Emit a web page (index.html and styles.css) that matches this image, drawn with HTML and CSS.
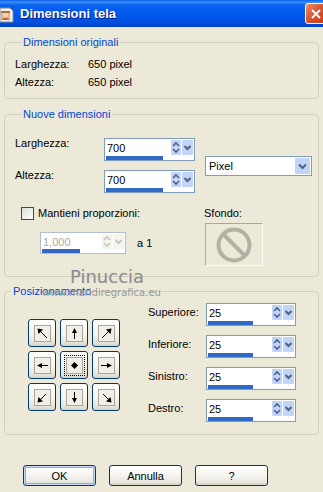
FILE: index.html
```html
<!DOCTYPE html>
<html>

<head>
    <title>Dimensioni tela</title>
    <link rel="stylesheet" href="styles.css">
</head>

<body>
    <div class="window">
        <!-- barra del titolo -->
        <div class="titlebar">
            <svg class="app-icon" width="16" height="16" viewBox="0 0 16 16">
                <path d="M1 1 H11 L14 4 V15 H1 Z" fill="#f4f1ea" stroke="#8a8a8a" />
                <rect x="2" y="4" width="9" height="9" fill="#e9b48c" />
                <circle cx="6.5" cy="7.5" r="2.6" fill="#f7d3b4" />
                <path d="M2 13 Q6.5 8.5 11 13 Z" fill="#c0653d" />
                <rect x="2" y="4" width="9" height="2" fill="#b06b4a" />
            </svg>
            <span class="title">Dimensioni tela</span>
            <div class="close-btn">
                <svg width="12" height="12" viewBox="0 0 12 12">
                    <path d="M2 2 L10 10 M10 2 L2 10" stroke="#fff" stroke-width="2" />
                </svg>
            </div>
        </div>

        <fieldset class="group group-orig">
            <legend>Dimensioni originali</legend>
            <div class="info-row"><span class="info-label">Larghezza:</span><span>650 pixel</span></div>
            <div class="info-row"><span class="info-label">Altezza:</span><span>650 pixel</span></div>
        </fieldset>

        <fieldset class="group group-new">
            <legend>Nuove dimensioni</legend>
            <div class="new-top">
                <div class="new-fields">
                    <div class="field-row">
                        <span class="field-label">Larghezza:</span>
                        <div class="spin">
                            <div class="spin-top">
                                <span class="spin-value">700</span>
                                <span class="spin-btn updown"><svg width="10" height="15" viewBox="0 0 10 15"><path d="M2 6 L5 3 L8 6 M2 9 L5 12 L8 9" fill="none" stroke="#4d6185" stroke-width="1.6" /></svg></span>
                                <span class="spin-btn drop"><svg width="11" height="15" viewBox="0 0 11 15"><path d="M2.5 6 L5.5 9 L8.5 6" fill="none" stroke="#4d6185" stroke-width="2" /></svg></span>
                            </div>
                            <div class="spin-bar" style="width: 57px"></div>
                        </div>
                    </div>
                    <div class="field-row">
                        <span class="field-label">Altezza:</span>
                        <div class="spin">
                            <div class="spin-top">
                                <span class="spin-value">700</span>
                                <span class="spin-btn updown"><svg width="10" height="15" viewBox="0 0 10 15"><path d="M2 6 L5 3 L8 6 M2 9 L5 12 L8 9" fill="none" stroke="#4d6185" stroke-width="1.6" /></svg></span>
                                <span class="spin-btn drop"><svg width="11" height="15" viewBox="0 0 11 15"><path d="M2.5 6 L5.5 9 L8.5 6" fill="none" stroke="#4d6185" stroke-width="2" /></svg></span>
                            </div>
                            <div class="spin-bar" style="width: 57px"></div>
                        </div>
                    </div>
                </div>
                <div class="select">
                    <span class="select-value">Pixel</span>
                    <span class="select-btn"><svg width="15" height="16" viewBox="0 0 15 16"><path d="M4 6.5 L7.5 10 L11 6.5" fill="none" stroke="#4d6185" stroke-width="2" /></svg></span>
                </div>
            </div>
            <div class="new-bottom">
                <div class="ratio-col">
                    <div class="check-row">
                        <span class="checkbox"></span>
                        <span>Mantieni proporzioni:</span>
                    </div>
                    <div class="ratio-row">
                        <div class="spin spin-ratio disabled">
                            <div class="spin-top">
                                <span class="spin-value">1,000</span>
                                <span class="spin-btn updown"><svg width="10" height="15" viewBox="0 0 10 15"><path d="M2 6 L5 3 L8 6 M2 9 L5 12 L8 9" fill="none" stroke="#c9c7ba" stroke-width="1.6" /></svg></span>
                                <span class="spin-btn drop"><svg width="11" height="15" viewBox="0 0 11 15"><path d="M2.5 6 L5.5 9 L8.5 6" fill="none" stroke="#c9c7ba" stroke-width="2" /></svg></span>
                            </div>
                            <div class="spin-bar" style="width: 38px"></div>
                        </div>
                        <span class="ratio-text">a 1</span>
                    </div>
                </div>
                <div class="bg-col">
                    <span>Sfondo:</span>
                    <div class="bg-box">
                        <svg width="40" height="40" viewBox="0 0 40 40">
                            <circle cx="20" cy="20" r="15.5" fill="none" stroke="#b4b1a4" stroke-width="4" />
                            <path d="M9 9 L31 31" stroke="#b4b1a4" stroke-width="4" />
                        </svg>
                    </div>
                </div>
            </div>
        </fieldset>

        <fieldset class="group group-pos">
            <legend>Posizionamento</legend>
            <div class="pos-body">
                <div class="pos-grid">
                    <div class="pos-btn"><span class="pos-icon"><svg width="15" height="15" viewBox="0 0 15 15"><path d="M4 4 L12 12" stroke="#000" /><path d="M2.5 2.5 L8 3.5 L3.5 8 Z" /></svg></span></div>
                    <div class="pos-btn"><span class="pos-icon"><svg width="15" height="15" viewBox="0 0 15 15"><path d="M7.5 5 V13" stroke="#000" /><path d="M7.5 2 L10 7 L5 7 Z" /></svg></span></div>
                    <div class="pos-btn"><span class="pos-icon"><svg width="15" height="15" viewBox="0 0 15 15"><path d="M11 4 L3 12" stroke="#000" /><path d="M12.5 2.5 L11.5 8 L7 3.5 Z" /></svg></span></div>
                    <div class="pos-btn"><span class="pos-icon"><svg width="15" height="15" viewBox="0 0 15 15"><path d="M5 7.5 H13" stroke="#000" /><path d="M2 7.5 L7 5 L7 10 Z" /></svg></span></div>
                    <div class="pos-btn focused"><span class="pos-icon"><svg width="15" height="15" viewBox="0 0 15 15"><path d="M7.5 4 L11 7.5 L7.5 11 L4 7.5 Z" /></svg></span></div>
                    <div class="pos-btn"><span class="pos-icon"><svg width="15" height="15" viewBox="0 0 15 15"><path d="M2 7.5 H10" stroke="#000" /><path d="M13 7.5 L8 5 L8 10 Z" /></svg></span></div>
                    <div class="pos-btn"><span class="pos-icon"><svg width="15" height="15" viewBox="0 0 15 15"><path d="M11 4 L4 11" stroke="#000" /><path d="M2.5 12.5 L3.5 7 L8 11.5 Z" /></svg></span></div>
                    <div class="pos-btn"><span class="pos-icon"><svg width="15" height="15" viewBox="0 0 15 15"><path d="M7.5 2 V10" stroke="#000" /><path d="M7.5 13 L10 8 L5 8 Z" /></svg></span></div>
                    <div class="pos-btn"><span class="pos-icon"><svg width="15" height="15" viewBox="0 0 15 15"><path d="M4 4 L11 11" stroke="#000" /><path d="M12.5 12.5 L7 11.5 L11.5 7 Z" /></svg></span></div>
                </div>
                <div class="margin-fields">
                    <div class="margin-row">
                        <span class="margin-label">Superiore:</span>
                        <div class="spin spin-margin">
                            <div class="spin-top">
                                <span class="spin-value">25</span>
                                <span class="spin-btn updown"><svg width="10" height="15" viewBox="0 0 10 15"><path d="M2 6 L5 3 L8 6 M2 9 L5 12 L8 9" fill="none" stroke="#4d6185" stroke-width="1.6" /></svg></span>
                                <span class="spin-btn drop"><svg width="11" height="15" viewBox="0 0 11 15"><path d="M2.5 6 L5.5 9 L8.5 6" fill="none" stroke="#4d6185" stroke-width="2" /></svg></span>
                            </div>
                            <div class="spin-bar" style="width: 45px"></div>
                        </div>
                    </div>
                    <div class="margin-row">
                        <span class="margin-label">Inferiore:</span>
                        <div class="spin spin-margin">
                            <div class="spin-top">
                                <span class="spin-value">25</span>
                                <span class="spin-btn updown"><svg width="10" height="15" viewBox="0 0 10 15"><path d="M2 6 L5 3 L8 6 M2 9 L5 12 L8 9" fill="none" stroke="#4d6185" stroke-width="1.6" /></svg></span>
                                <span class="spin-btn drop"><svg width="11" height="15" viewBox="0 0 11 15"><path d="M2.5 6 L5.5 9 L8.5 6" fill="none" stroke="#4d6185" stroke-width="2" /></svg></span>
                            </div>
                            <div class="spin-bar" style="width: 45px"></div>
                        </div>
                    </div>
                    <div class="margin-row">
                        <span class="margin-label">Sinistro:</span>
                        <div class="spin spin-margin">
                            <div class="spin-top">
                                <span class="spin-value">25</span>
                                <span class="spin-btn updown"><svg width="10" height="15" viewBox="0 0 10 15"><path d="M2 6 L5 3 L8 6 M2 9 L5 12 L8 9" fill="none" stroke="#4d6185" stroke-width="1.6" /></svg></span>
                                <span class="spin-btn drop"><svg width="11" height="15" viewBox="0 0 11 15"><path d="M2.5 6 L5.5 9 L8.5 6" fill="none" stroke="#4d6185" stroke-width="2" /></svg></span>
                            </div>
                            <div class="spin-bar" style="width: 45px"></div>
                        </div>
                    </div>
                    <div class="margin-row">
                        <span class="margin-label">Destro:</span>
                        <div class="spin spin-margin">
                            <div class="spin-top">
                                <span class="spin-value">25</span>
                                <span class="spin-btn updown"><svg width="10" height="15" viewBox="0 0 10 15"><path d="M2 6 L5 3 L8 6 M2 9 L5 12 L8 9" fill="none" stroke="#4d6185" stroke-width="1.6" /></svg></span>
                                <span class="spin-btn drop"><svg width="11" height="15" viewBox="0 0 11 15"><path d="M2.5 6 L5.5 9 L8.5 6" fill="none" stroke="#4d6185" stroke-width="2" /></svg></span>
                            </div>
                            <div class="spin-bar" style="width: 45px"></div>
                        </div>
                    </div>
                </div>
            </div>
        </fieldset>

        <div class="buttons">
            <div class="btn btn-default">OK</div>
            <div class="btn">Annulla</div>
            <div class="btn">?</div>
        </div>

        <!-- filigrana sopra il contenuto -->
        <div class="watermark">
            <div class="wm-name">Pinuccia</div>
            <div class="wm-site">www.maridiregrafica.eu</div>
        </div>
    </div>
</body>

</html>
```

FILE: styles.css
```css
body {
    margin: 0;
    background: #ece9d8;
    font-family: "Liberation Sans", Arial, sans-serif;
    font-size: 11px;
    color: #000;
    overflow: hidden;
}

.window {
    position: relative;
    width: 323px;
    height: 492px;
    overflow: hidden;
}

/* barra del titolo */
.titlebar {
    height: 27px;
    display: flex;
    align-items: center;
    background: linear-gradient(#0a5ce6 0, #3d8ff8 2px, #0b62ef 5px, #0058ee 14px, #0052e0 22px, #0043c6 27px);
}

.app-icon {
    margin-left: -1px;
    margin-top: 2px;
}

.title {
    margin-left: 5px;
    font-size: 13px;
    font-weight: bold;
    color: #fff;
    text-shadow: 1px 1px 0 #0a1a7a;
    flex: 1;
}

.close-btn {
    width: 21px;
    height: 21px;
    flex-shrink: 0;
    margin-right: -3px;
    box-sizing: border-box;
    border: 1px solid #fff;
    border-radius: 3px;
    background: linear-gradient(135deg, #ec8b6c, #d9532f 50%, #c13d17);
    display: flex;
    align-items: center;
    justify-content: center;
}

/* gruppi */
.group {
    margin: 9px 4px 0;
    border: 1px solid #d0d0bf;
    border-radius: 4px;
    padding: 0;
    min-width: 0;
}

.group legend {
    margin-left: 6px;
    padding: 0 2px;
    color: #0046d5;
    line-height: 13px;
}

.group-orig {
    padding: 6px 0 7px 10px;
}

.info-row {
    display: flex;
    line-height: 18px;
}

.info-label {
    width: 73px;
}

.group-new {
    padding: 17px 0 10px 10px;
}

.new-top {
    display: flex;
    align-items: center;
}

.new-fields {
    display: flex;
    flex-direction: column;
    gap: 9px;
}

.field-row {
    display: flex;
    align-items: flex-start;
}

.field-label {
    width: 89px;
    line-height: 13px;
    margin-top: -1px;
}

/* campo numerico con barra */
.spin {
    width: 91px;
    height: 23px;
    box-sizing: border-box;
    border: 1px solid #7f9db9;
    background: #fff;
    display: flex;
    flex-direction: column;
}

.spin-top {
    height: 17px;
    display: flex;
    align-items: center;
    padding-right: 1px;
}

.spin-value {
    flex: 1;
    padding-left: 2px;
    padding-top: 1px;
}

.spin-btn {
    height: 15px;
    display: flex;
    background: #c3d4f9;
    border-radius: 1px;
}

.spin-btn.drop {
    margin-left: 1px;
}

.spin-bar {
    height: 4px;
    margin-left: 1px;
    background: #316ac5;
}

.spin.disabled {
    border-color: #b3bfcf;
    color: #aca899;
}

.spin.disabled .spin-btn {
    background: #f4f3ee;
}

.spin-ratio {
    width: 86px;
    height: 22px;
}

.spin-margin {
    width: 90px;
}

.select {
    margin-left: 10px;
    width: 107px;
    height: 20px;
    box-sizing: border-box;
    border: 1px solid #7f9db9;
    background: #fff;
    display: flex;
    align-items: center;
    padding-right: 1px;
}

.select-value {
    flex: 1;
    padding-left: 3px;
}

.select-btn {
    display: flex;
    background: #c3d4f9;
    border-radius: 1px;
}

.new-bottom {
    display: flex;
    margin-top: 13px;
}

.ratio-col {
    width: 190px;
}

.check-row {
    display: flex;
    align-items: center;
    height: 14px;
    padding-left: 6px;
    gap: 4px;
}

.checkbox {
    width: 13px;
    height: 13px;
    box-sizing: border-box;
    border: 1px solid #1c5180;
    background: linear-gradient(135deg, #dcdcd7, #fff);
}

.ratio-row {
    display: flex;
    align-items: center;
    margin-top: 12px;
    padding-left: 25px;
}

.ratio-text {
    margin-left: 11px;
}

.bg-col {
    display: flex;
    flex-direction: column;
    line-height: 14px;
    margin-left: -1px;
}

.bg-box {
    margin-top: 3px;
    margin-left: 1px;
    width: 58px;
    height: 43px;
    box-sizing: border-box;
    border: 1px solid;
    border-color: #aca899 #fff #fff #aca899;
    display: flex;
    align-items: center;
    justify-content: center;
}

/* posizionamento */
.group-pos {
    margin-top: 8px;
    padding: 5px 0 12px 0;
}

.pos-body {
    display: flex;
}

.pos-grid {
    display: grid;
    grid-template-columns: repeat(3, 28px);
    grid-auto-rows: 28px;
    gap: 4px;
    margin: 16px 0 0 23px;
    align-self: flex-start;
}

.pos-btn {
    box-sizing: border-box;
    border: 1px solid #003c74;
    border-radius: 3px;
    background: linear-gradient(#ffffff, #f3f2ec 60%, #e3e0d4 90%, #d6d0c5);
    display: flex;
    align-items: center;
    justify-content: center;
}

.pos-icon {
    width: 17px;
    height: 17px;
    box-sizing: border-box;
    border: 1px solid #aca899;
    background: #f1efe7;
    display: flex;
    align-items: center;
    justify-content: center;
}

.pos-btn.focused .pos-icon {
    outline: 1px dotted #000;
    outline-offset: 1px;
}

.margin-fields {
    margin-left: 28px;
    display: flex;
    flex-direction: column;
    gap: 9px;
}

.margin-row {
    display: flex;
    align-items: flex-start;
}

.margin-label {
    width: 58px;
    line-height: 13px;
    margin-top: 3px;
}

/* pulsanti in basso */
.buttons {
    display: flex;
    gap: 13px;
    margin-top: 30px;
    padding-left: 23px;
}

.btn {
    width: 73px;
    height: 21px;
    box-sizing: border-box;
    border: 1px solid #003c74;
    border-radius: 3px;
    background: linear-gradient(#ffffff, #f5f4ef 50%, #e8e6dd 85%, #d6d0c5);
    display: flex;
    align-items: center;
    justify-content: center;
}

.btn-default {
    box-shadow: inset 0 0 0 1px #c6daf8, inset 0 0 0 2px #8caee6;
}

/* filigrana */
.watermark {
    position: absolute;
    left: 42px;
    top: 266px;
    font-family: "DejaVu Sans", sans-serif;
    color: #8d8d8d;
    pointer-events: none;
}

.wm-name {
    margin-left: 28px;
    font-size: 18px;
    line-height: 22px;
    text-shadow: 0 0 1px #d8d6cc;
}

.wm-site {
    font-size: 10px;
    line-height: 11px;
    margin-top: -1px;
    color: #999;
}
```
